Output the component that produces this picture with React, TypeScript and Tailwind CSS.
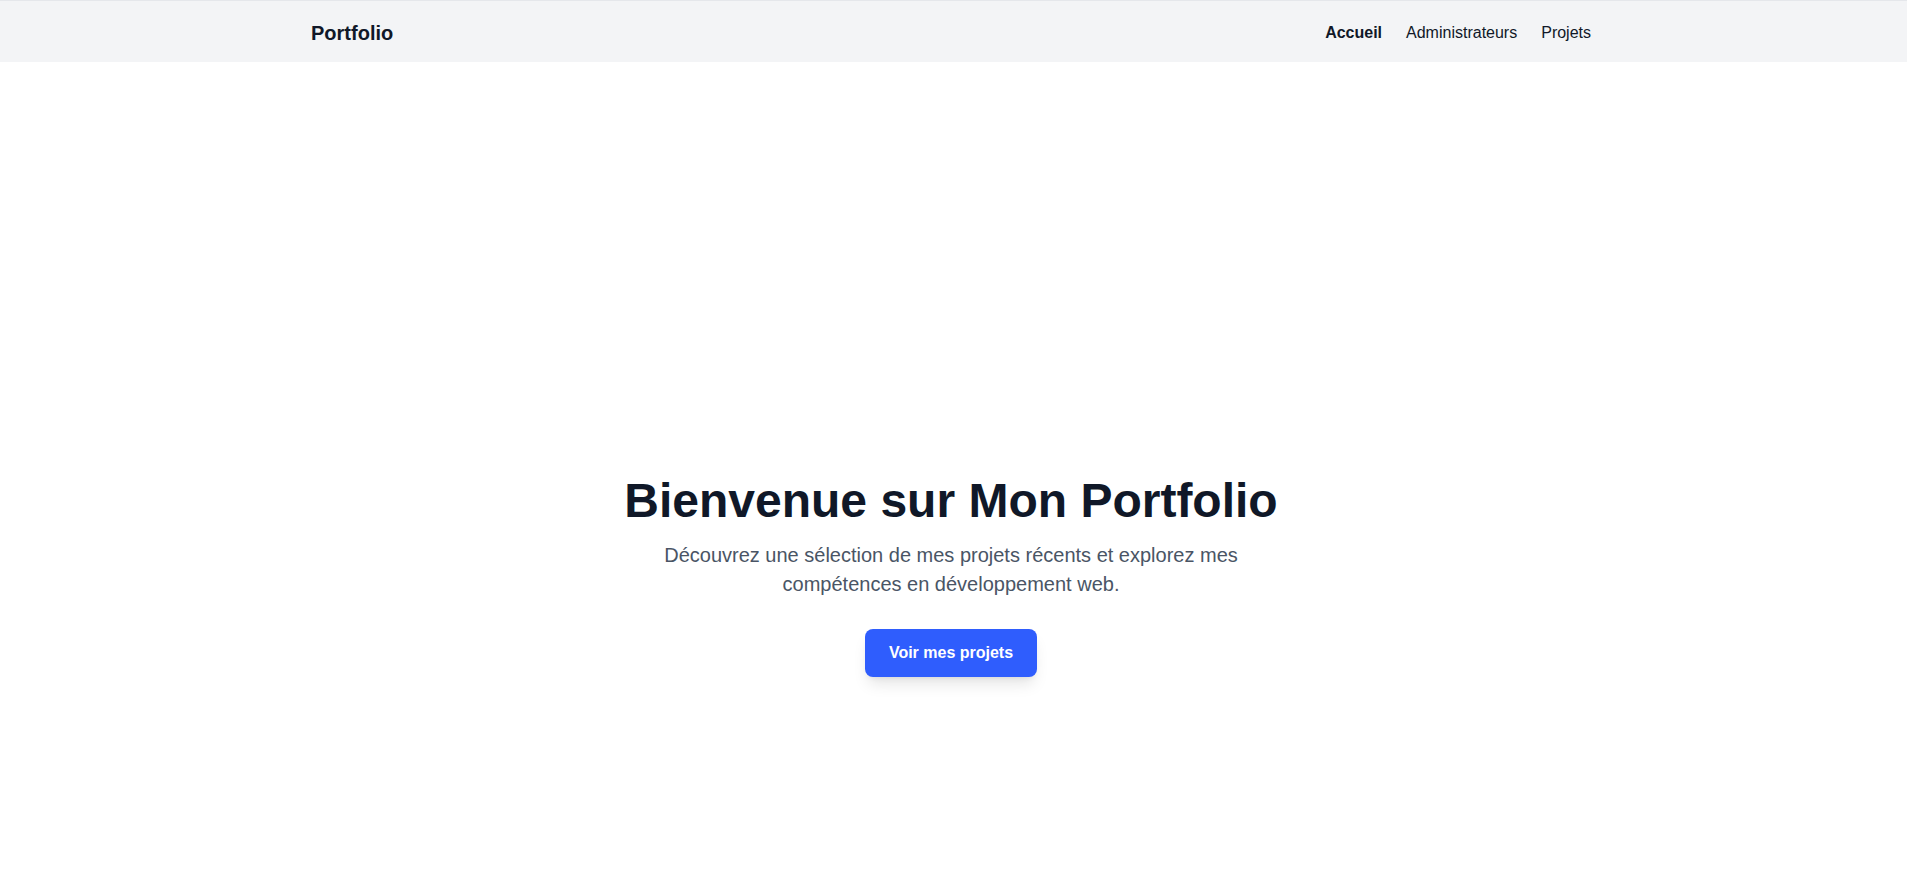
import React from "react";

const links = [
  { label: "Accueil", active: true },
  { label: "Administrateurs", active: false },
  { label: "Projets", active: false },
];

function Navbar() {
  return (
    <nav className="bg-gray-100 border-t border-gray-200 h-[62px] pr-[5px]">
      <div className="max-w-7xl mx-auto h-full flex items-center justify-between pt-[2px]">
        <a className="text-xl font-bold text-gray-900">Portfolio</a>
        <ul className="flex items-center gap-6 text-base text-gray-900">
          {links.map((link) => (
            <li key={link.label} className={link.active ? "font-bold" : ""}>
              {link.label}
            </li>
          ))}
        </ul>
      </div>
    </nav>
  );
}

function Hero() {
  return (
    <section className="flex flex-col items-center text-center pt-[415px] pb-24 pr-[5px]">
      <h1 className="text-5xl font-bold text-gray-900">
        Bienvenue sur Mon Portfolio
      </h1>
      <p className="mt-4 max-w-2xl text-xl leading-[29px] text-gray-600">
        Découvrez une sélection de mes projets récents et explorez mes
        compétences en développement web.
      </p>
      <button className="mt-[30px] px-6 py-3 rounded-lg bg-[#2f5dfd] text-white font-bold text-base shadow-lg">
        Voir mes projets
      </button>
    </section>
  );
}

export default function App() {
  return (
    <div className="min-h-screen bg-white font-['Liberation_Sans',Arial,sans-serif]">
      <Navbar />
      <Hero />
    </div>
  );
}
